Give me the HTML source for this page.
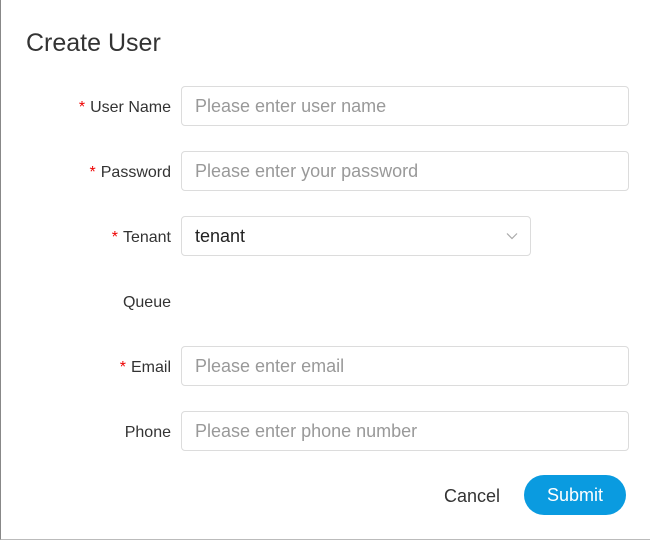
<!DOCTYPE html>
<html><head><style>
body{margin:0;width:650px;height:541px;background:#fff;font-family:"Liberation Sans",sans-serif;overflow:hidden;position:relative}
.frame{position:absolute;left:0;top:0;width:649px;height:539px;border-left:1px solid #888;border-bottom:1px solid #bbb}
.title{position:absolute;left:26px;top:29px;font-size:25px;color:#333}
.lbl{position:absolute;right:479px;font-size:16px;color:#333;line-height:40px;margin-top:2px}
.lbl b{color:#e00;font-weight:normal;margin-right:5px}
.in{position:absolute;left:181px;height:38px;border:1px solid #dcdcdc;border-radius:4px;font-size:18px;line-height:38px;color:#999;padding-left:13px;width:433px}
.btn{position:absolute;left:524px;top:475px;width:102px;height:40px;border-radius:20px;background:#0a9be0;color:#fff;font-size:18px;line-height:40px;text-align:center}
.cancel{position:absolute;left:444px;top:476px;line-height:40px;font-size:18px;color:#333}
</style></head><body>
<div class="frame"></div>
<div class="title">Create User</div>
<div class="lbl" style="top:86px"><b>*</b>User Name</div>
<div class="in" style="top:86px">Please enter user name</div>
<div class="lbl" style="top:151px"><b>*</b>Password</div>
<div class="in" style="top:151px">Please enter your password</div>
<div class="lbl" style="top:216px"><b>*</b>Tenant</div>
<div class="in" style="top:216px;width:335px;color:#222">tenant
<svg style="position:absolute;right:12px;top:15px" width="12" height="8" viewBox="0 0 12 8"><path d="M1 1.5L6 6.5L11 1.5" fill="none" stroke="#aaa" stroke-width="1.2"/></svg></div>
<div class="lbl" style="top:281px">Queue</div>
<div class="lbl" style="top:346px"><b>*</b>Email</div>
<div class="in" style="top:346px">Please enter email</div>
<div class="lbl" style="top:411px">Phone</div>
<div class="in" style="top:411px">Please enter phone number</div>
<div class="cancel">Cancel</div>
<div class="btn">Submit</div>
</body></html>
